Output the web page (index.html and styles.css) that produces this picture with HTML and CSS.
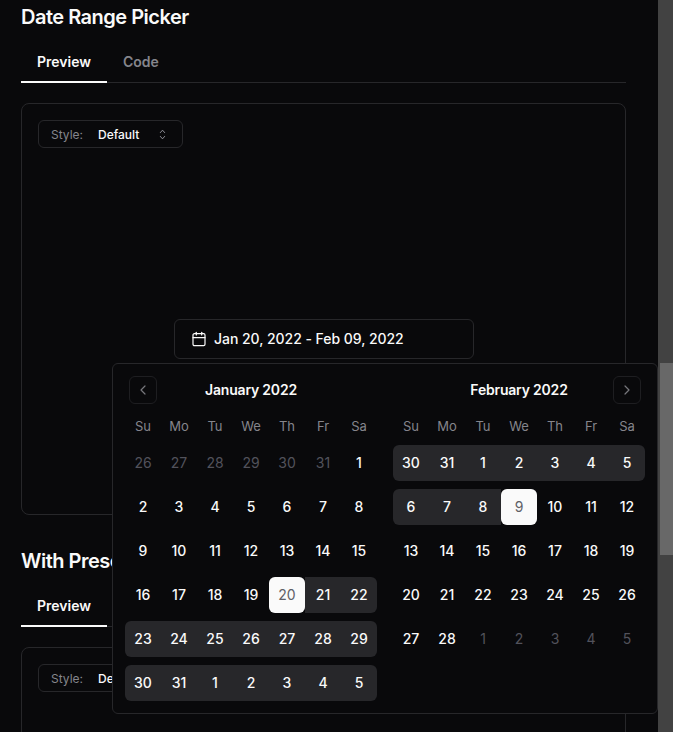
FILE: index.html
```html
<!DOCTYPE html>
<html lang="en">
<head>
<meta charset="utf-8">
<title>Date Range Picker</title>
<link rel="stylesheet" href="styles.css">
</head>
<body>
<div class="app">
<main class="content">
  <section class="demo">
    <h2 class="title">Date Range Picker</h2>
    <div class="tabs"><span class="tab active">Preview</span><span class="tab">Code</span></div>
    <div class="card">
      <div class="select"><span class="select-label">Style:</span><span class="select-value">Default</span>
        <svg class="select-icon" viewBox="0 0 24 24"><path d="m8 15.5 4 4.5 4-4.5"/><path d="m8 8.5 4-4.5 4 4.5"/></svg>
      </div>
      <div class="stage">
        <div class="picker">
          <button class="date-btn">
            <svg class="cal-icon" viewBox="0 0 24 24"><path d="M8 2v4"/><path d="M16 2v4"/><rect x="3" y="4" width="18" height="18" rx="2"/><path d="M3 10h18"/></svg>
            <span>Jan 20, 2022 - Feb 09, 2022</span>
          </button>
          <div class="popover">
            <div class="month">
              <div class="month-head">
                <span class="nav nav-left"><svg viewBox="0 0 24 24"><path d="m15 18-6-6 6-6"/></svg></span>
                <span class="month-name">January 2022</span>
              </div>
              <div class="days">
                <span class="wd">Su</span><span class="wd">Mo</span><span class="wd">Tu</span><span class="wd">We</span><span class="wd">Th</span><span class="wd">Fr</span><span class="wd">Sa</span>
                <span class="d out">26</span><span class="d out">27</span><span class="d out">28</span><span class="d out">29</span><span class="d out">30</span><span class="d out">31</span><span class="d">1</span>
                <span class="d">2</span><span class="d">3</span><span class="d">4</span><span class="d">5</span><span class="d">6</span><span class="d">7</span><span class="d">8</span>
                <span class="d">9</span><span class="d">10</span><span class="d">11</span><span class="d">12</span><span class="d">13</span><span class="d">14</span><span class="d">15</span>
                <span class="d">16</span><span class="d">17</span><span class="d">18</span><span class="d">19</span><span class="d sel-wrap"><span class="sel">20</span></span><span class="d r">21</span><span class="d r re">22</span>
                <span class="d r rs">23</span><span class="d r">24</span><span class="d r">25</span><span class="d r">26</span><span class="d r">27</span><span class="d r">28</span><span class="d r re">29</span>
                <span class="d r rs">30</span><span class="d r">31</span><span class="d r">1</span><span class="d r">2</span><span class="d r">3</span><span class="d r">4</span><span class="d r re">5</span>
              </div>
            </div>
            <div class="month">
              <div class="month-head">
                <span class="month-name">February 2022</span>
                <span class="nav nav-right"><svg viewBox="0 0 24 24"><path d="m9 18 6-6-6-6"/></svg></span>
              </div>
              <div class="days">
                <span class="wd">Su</span><span class="wd">Mo</span><span class="wd">Tu</span><span class="wd">We</span><span class="wd">Th</span><span class="wd">Fr</span><span class="wd">Sa</span>
                <span class="d r rs">30</span><span class="d r">31</span><span class="d r">1</span><span class="d r">2</span><span class="d r">3</span><span class="d r">4</span><span class="d r re">5</span>
                <span class="d r rs">6</span><span class="d r">7</span><span class="d r">8</span><span class="d sel-wrap"><span class="sel">9</span></span><span class="d">10</span><span class="d">11</span><span class="d">12</span>
                <span class="d">13</span><span class="d">14</span><span class="d">15</span><span class="d">16</span><span class="d">17</span><span class="d">18</span><span class="d">19</span>
                <span class="d">20</span><span class="d">21</span><span class="d">22</span><span class="d">23</span><span class="d">24</span><span class="d">25</span><span class="d">26</span>
                <span class="d">27</span><span class="d">28</span><span class="d out">1</span><span class="d out">2</span><span class="d out">3</span><span class="d out">4</span><span class="d out">5</span>
              </div>
            </div>
          </div>
        </div>
      </div>
    </div>
  </section>
  <section class="demo second">
    <h2 class="title">With Presets</h2>
    <div class="tabs"><span class="tab active">Preview</span><span class="tab">Code</span></div>
    <div class="card">
      <div class="select"><span class="select-label">Style:</span><span class="select-value">Default</span>
        <svg class="select-icon" viewBox="0 0 24 24"><path d="m8 15.5 4 4.5 4-4.5"/><path d="m8 8.5 4-4.5 4 4.5"/></svg>
      </div>
    </div>
  </section>
</main>
<aside class="scrollbar"><div class="thumb"></div></aside>
</div>
</body>
</html>
```
FILE: styles.css
```css
* { box-sizing: border-box; }
html, body { margin: 0; height: 100%; overflow: hidden; }
body { background: #09090b; color: #fafafa; font-family: Inter, "Liberation Sans", sans-serif; }
.app { display: flex; height: 732px; overflow: hidden; }
.content { flex: 0 0 658px; padding: 3px 32px 0 21px; overflow: hidden; height: 732px; }
.second { margin-top: 32px; }
.title { margin: 0; font-size: 20px; line-height: 28px; font-weight: 600; letter-spacing: -0.5px; }
.tabs { display: flex; margin-top: 11px; height: 41px; border-bottom: 1px solid #27272a; }
.tab { padding: 0 16px; height: 41px; line-height: 40px; font-size: 14px; font-weight: 600; color: #85858c; }
.tab.active { color: #fafafa; border-bottom: 2px solid #fafafa; }
.card { margin-top: 20px; height: 412px; border: 1px solid #27272a; border-radius: 8px; padding: 16px; display: flex; flex-direction: column; align-items: flex-start; }
.select { display: flex; align-items: center; width: 145px; height: 28px; border: 1px solid #27272a; border-radius: 6px; padding-left: 12px; font-size: 12px; flex: none; }
.select-label { color: #85858c; width: 47px; }
.select-value { font-weight: 500; color: #fafafa; width: 58px; }
.select-icon { width: 13px; height: 13px; fill: none; stroke: #a1a1aa; stroke-width: 1.6; stroke-linecap: round; stroke-linejoin: round; }
.stage { flex: 1; align-self: stretch; display: flex; align-items: center; justify-content: center; padding-top: 32px; }
.picker { position: relative; width: 300px; }
.date-btn { display: flex; align-items: center; gap: 7.5px; width: 300px; height: 40px; padding: 0 16px 1px; background: transparent; border: 1px solid #27272a; border-radius: 6px; color: #fafafa; font: 500 14px Inter, "Liberation Sans", sans-serif; letter-spacing: -0.04px; }
.cal-icon { width: 16px; height: 16px; fill: none; stroke: #fafafa; stroke-width: 1.8; stroke-linecap: round; stroke-linejoin: round; flex: none; }
.popover { position: absolute; top: 44px; left: -62px; z-index: 10; display: flex; gap: 16px; width: 546px; height: 351px; padding: 12px; background: #09090b; border: 1px solid #27272a; border-radius: 6px; }
.month { width: 252px; }
.month-head { position: relative; height: 28px; display: flex; align-items: center; justify-content: center; margin-bottom: 12px; padding: 0 0 2px 1px; }
.month-name { font-size: 14px; font-weight: 600; letter-spacing: -0.2px; }
.nav { position: absolute; top: 0; width: 28px; height: 28px; border: 1px solid #1e1e21; border-radius: 6px; display: flex; align-items: center; justify-content: center; }
.nav-left { left: 4px; }
.nav-right { right: 4px; }
.nav svg { width: 16px; height: 16px; fill: none; stroke: #77777c; stroke-width: 1.8; stroke-linecap: round; stroke-linejoin: round; }
.days { display: grid; grid-template-columns: repeat(7, 36px); grid-template-rows: 21px repeat(6, 36px); row-gap: 8px; }
.wd { display: flex; align-items: center; justify-content: center; height: 20px; padding-left: 1px; font-size: 13px; color: #85858c; }
.d { display: flex; align-items: center; justify-content: center; padding: 0 0 1px 1px; font-size: 14px; font-weight: 500; color: #fafafa; }
.d.out { color: #52525b; font-weight: 400; }
.d.r { background: #27272a; }
.d.rs { border-radius: 6px 0 0 6px; }
.d.re { border-radius: 0 6px 6px 0; }
.d.sel-wrap { padding: 0; background: #27272a; border-radius: 6px; }
.sel { display: flex; align-items: center; justify-content: center; width: 100%; height: 100%; padding: 0 0 1px 1px; background: #fafafa; color: #606066; font-weight: 400; border-radius: 6px; }
.scrollbar { flex: 0 0 15px; background: #424242; height: 732px; padding: 363px 0 0 2px; }
.thumb { height: 192px; background: #686868; }
```
